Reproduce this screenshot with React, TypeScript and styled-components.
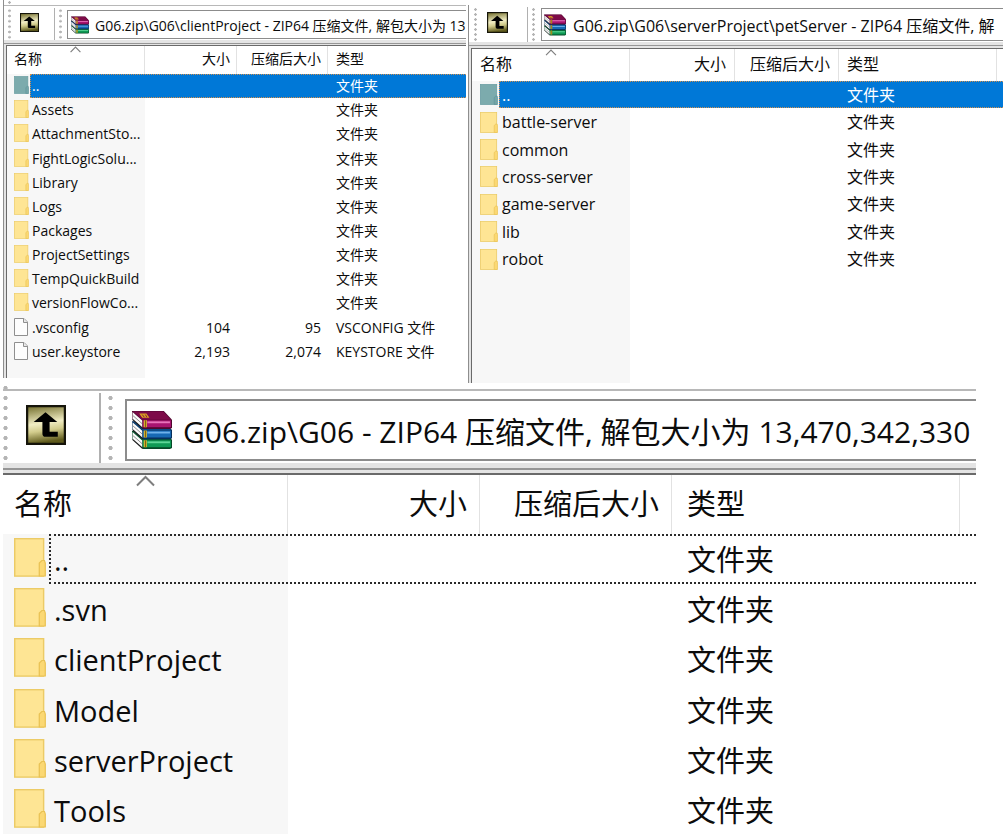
import React from 'react';
import styled, { createGlobalStyle, css, ThemeProvider } from 'styled-components';

/* ---------- metrics for the three zoom levels ---------- */

const small = {
  font: 14, pathFont: 14, line: 1, edge: 1, inset: 2, lead: 5, topLine: 1,
  bar: 34, barLift: 1, gripLead: 4, grip: 3, pitch: 5, gapA: 9, up: 19, gapB: 15, gapC: 4, gapD: 5,
  boxTop: 4, boxHeight: 29, boxPad: 3, book: 18, bookGap: 6,
  strip: 3, rule: 1, ruleGap: 1,
  head: 28, table: 318, tail: 14, padName: 7, padEnd: 7, padStart: 8,
  iconW: 15, iconH: 18, iconLift: 2, labelGap: 3, focus: 23, caretW: 11, caretH: 7,
  cols: [138, 92, 91],
};

const medium = {
  ...small,
  font: 16, pathFont: 16, inset: 2, lead: 0, topLine: 0,
  bar: 37, barLift: 3, gripLead: 5, gapA: 10, up: 21, gapB: 19, gapC: 4, gapD: 6,
  boxTop: 3, boxHeight: 33, boxPad: 2, book: 22, bookGap: 7,
  strip: 3, rule: 1, ruleGap: 2,
  head: 32, table: 224, tail: 110, padName: 8, padEnd: 9, padStart: 8,
  iconW: 18, iconH: 21, iconLift: 0, labelGap: 4, focus: 27, caretW: 12, caretH: 7,
  cols: [158, 105, 104, 158],
};

const large = {
  ...small,
  font: 29, pathFont: 30, line: 2, edge: 0, inset: 0, lead: 6, topLine: 2,
  bar: 72, barLift: 4, gripLead: 0, grip: 5, pitch: 10, gapA: 18, up: 40, gapB: 33, gapC: 7, gapD: 12,
  boxTop: 8, boxHeight: 62, boxPad: 5, book: 40, bookGap: 11,
  strip: 5, rule: 2, ruleGap: 3,
  head: 59, table: 361, tail: 0, padName: 11, padEnd: 13, padStart: 15,
  iconW: 32, iconH: 39, iconLift: 4, labelGap: 8, focus: 46, caretW: 19, caretH: 12,
  cols: [285, 192, 192, 288],
};

type Metrics = typeof small;

/* ---------- styles ---------- */

const Global = createGlobalStyle`
  *, *::before, *::after { box-sizing: border-box; }
  body {
    margin: 0;
    background: #fff;
    color: #0c0c0c;
    font-family: "Open Sans", "Noto Sans CJK SC", sans-serif;
  }
`;

const Page = styled.main`
  height: 100vh;
  padding: 0 3px;
  overflow: hidden;
`;

const TopPanes = styled.div`
  display: grid;
  grid-template-columns: 463fr 535fr;
  column-gap: 2px;
  height: 383px;
`;

const BottomPane = styled.div`
  margin-right: 27px;
`;

const Pane = styled.section<{ $drop?: number }>`
  align-self: start;
  min-width: 0;
  overflow: hidden;
  margin-top: ${(p) => p.$drop ?? 0}px;
  border-left: ${(p) => p.theme.edge}px solid #8e8e8e;
  font-size: ${(p) => p.theme.font}px;
  line-height: 1;
`;

const dots = css`
  background-image: radial-gradient(circle closest-side, #b4b4b4 70%, transparent);
  background-size: ${(p) => p.theme.grip}px ${(p) => p.theme.pitch}px;
`;

const Lead = styled.div`
  height: ${(p) => p.theme.lead}px;
  margin-left: ${(p) => p.theme.gripLead}px;
  ${dots}
  background-repeat: no-repeat;
`;

const Toolbar = styled.div`
  display: flex;
  height: ${(p) => p.theme.bar + p.theme.topLine}px;
  border-top: ${(p) => p.theme.topLine}px solid #b8b8b8;
  padding-left: ${(p) => p.theme.gripLead}px;
`;

const Grip = styled.span`
  flex: none;
  width: ${(p) => p.theme.grip}px;
  margin-top: 2px;
  ${dots}
  background-repeat: no-repeat round;
`;

const UpButton = styled.button`
  flex: none;
  display: flex;
  align-items: center;
  margin: 0 ${(p) => p.theme.gapB}px 0 ${(p) => p.theme.gapA}px;
  padding: 0 0 ${(p) => p.theme.barLift}px;
  border: 0;
  background: none;
`;

const Separator = styled.span`
  flex: none;
  width: ${(p) => p.theme.line}px;
  margin: 2px ${(p) => p.theme.gapC}px 0 0;
  background: #b0b0b0;
`;

const AddressBox = styled.div`
  flex: 1;
  min-width: 0;
  display: flex;
  align-items: center;
  gap: ${(p) => p.theme.bookGap}px;
  height: ${(p) => p.theme.boxHeight}px;
  margin: ${(p) => p.theme.boxTop}px 0 0 ${(p) => p.theme.gapD}px;
  padding-left: ${(p) => p.theme.boxPad}px;
  border: ${(p) => p.theme.line}px solid #8c8c8c;
  border-right: 0;
  font-size: ${(p) => p.theme.pathFont}px;

  svg { flex: none; }
`;

const AddressInput = styled.input`
  flex: 1;
  min-width: 0;
  height: 100%;
  padding: 0;
  border: 0;
  outline: 0;
  background: none;
  color: inherit;
  font: inherit;
`;

const Strip = styled.div`
  height: ${(p) => p.theme.strip + p.theme.rule}px;
  background: #e4e4e4;
  border-bottom: ${(p) => p.theme.rule}px solid #969696;
`;

const ListFrame = styled.div`
  padding: ${(p) => p.theme.ruleGap}px 0 0 ${(p) => p.theme.inset}px;
  background: #e4e4e4;
`;

const List = styled.div`
  border-top: ${(p) => p.theme.line}px solid #6a6a6a;
  border-left: ${(p) => p.theme.edge}px solid #6a6a6a;
  background: #fff;
`;

const Table = styled.table`
  width: 100%;
  height: ${(p) => p.theme.table}px;
  table-layout: fixed;
  border-collapse: separate;
  border-spacing: 0;
  white-space: nowrap;
`;

const HeadCell = styled.th<{ $end?: boolean; $first?: boolean; $open?: boolean }>`
  position: relative;
  height: ${(p) => p.theme.head}px;
  padding: 0 ${(p) => (p.$end ? p.theme.padEnd - 1 : 0)}px 2px
    ${(p) => (p.$first ? p.theme.padName : p.theme.padStart)}px;
  border-right: ${(p) => (p.$open ? 0 : 1)}px solid #e2e2e2;
  font-weight: 400;
  text-align: ${(p) => (p.$end ? 'right' : 'left')};
`;

const CaretBox = styled.span`
  position: absolute;
  top: 0;
  left: 0;
  right: 0;
  display: flex;
  justify-content: center;
`;

const Row = styled.tr<{ $mark?: Mark }>`
  position: relative;
  color: ${(p) => (p.$mark === 'selected' ? '#fff' : 'inherit')};
`;

const Cell = styled.td<{ $end?: boolean }>`
  padding: 0 ${(p) => (p.$end ? p.theme.padEnd : 0)}px 0 ${(p) => p.theme.padStart}px;
  text-align: ${(p) => (p.$end ? 'right' : 'left')};

  span { position: relative; }
`;

const NameCell = styled.td`
  padding: 0 0 0 ${(p) => p.theme.padName}px;
  background: #f7f7f7;
`;

/* Lies over the whole row, from the right of the icon to the pane's edge. */
const RowMark = styled.span<{ $mark: Mark }>`
  position: absolute;
  inset: 0 0 0 ${(p) => p.theme.focus}px;
  border: ${(p) => p.theme.line}px dotted ${(p) => (p.$mark === 'selected' ? '#d09050' : '#2a2a2a')};
  border-right: 0;
  background: ${(p) => (p.$mark === 'selected' ? '#0078d7' : 'none')};
`;

const Name = styled.div`
  position: relative;
  display: flex;
  align-items: center;
  gap: ${(p) => p.theme.labelGap}px;

  svg {
    flex: none;
    margin-bottom: ${(p) => p.theme.iconLift}px;
  }
`;

const Tail = styled.div`
  width: ${(p) => p.theme.cols[0]}px;
  height: ${(p) => p.theme.tail}px;
  background: #f7f7f7;
`;

/* ---------- icons ---------- */

const UpIcon = ({ size, id }: { size: number; id: string }) => (
  <svg width={size} height={size} viewBox="0 0 39 39" aria-hidden="true">
    <defs>
      <linearGradient id={id} x1="0" y1="0" x2="0.15" y2="1">
        <stop offset="0" stopColor="#6f6a28" />
        <stop offset="0.5" stopColor="#f1edc4" />
        <stop offset="0.7" stopColor="#d2cc8c" />
        <stop offset="1" stopColor="#5f5a1c" />
      </linearGradient>
    </defs>
    <rect x="1" y="1" width="37" height="37" fill={`url(#${id})`} stroke="#15140a" strokeWidth="2.4" />
    <path d="M19 7L30.5 16.5H23V26H31V31H19Q16 31 16 28V16.5H7.5Z" fill="#000" />
  </svg>
);

const BooksIcon = ({ size }: { size: number }) => (
  <svg width={size} height={size} viewBox="0 0 39 39" aria-hidden="true">
    {[
      { y: 20, cover: '#0b6b3c', spine: '#0f9a55', light: '#5fd698', dark: '#064a28' },
      { y: 10.5, cover: '#0b4a86', spine: '#1769b4', light: '#6fb2ea', dark: '#06305c' },
      { y: 0.5, cover: '#7d0b48', spine: '#a81470', light: '#e874bb', dark: '#4f062e' },
    ].map((b) => (
      <g key={b.cover} transform={`translate(0 ${b.y})`}>
        <path d="M0 0.5H31L39 9V17L37 18H11L0 8Z" fill={b.dark} />
        <path d="M1 1H30.5L38 9H10Z" fill={b.cover} />
        <path d="M0.5 1.5L10 9.8V17L0.5 8.4Z" fill="#fafafa" />
        <path d="M0.5 4.6L9.8 12.8" stroke="#8a8a8a" strokeWidth="0.9" />
        <path d="M0.5 8.6L10.5 17.6" stroke="#1c1c1c" strokeWidth="1.2" />
        <rect x="10.5" y="9.5" width="27.5" height="6.8" fill={b.spine} />
        <rect x="15" y="10.6" width="22" height="1.8" fill={b.light} />
        <rect x="11.5" y="9.5" width="3" height="6.8" fill="#d9b62c" />
        <rect x="12.6" y="9.5" width="1" height="6.8" fill="#7d5f10" />
      </g>
    ))}
    <path d="M7 3.5H14L17 7.5H10Z" fill="#dba41e" />
    <path d="M10 4.5L12 7M13 4.5L14.5 7" stroke="#7d0b48" strokeWidth="0.9" />
  </svg>
);

const FolderIcon = ({ w, h, teal }: { w: number; h: number; teal?: boolean }) => (
  <svg width={w} height={h} viewBox="0 0 31 39" preserveAspectRatio="none" aria-hidden="true">
    <rect x="0.7" y="0.7" width="28" height="37.4" fill={teal ? '#7cabad' : '#fee594'} stroke={teal ? '#6c9fa3' : '#eccb66'} strokeWidth="1.4" />
    <path d="M24.5 38V25L27 22.5H29.5L30.3 25V38Z" fill={teal ? '#74a5a8' : '#fbd873'} stroke={teal ? '#5f959a' : '#e9c254'} strokeWidth="1.2" />
  </svg>
);

const FileIcon = ({ w, h }: { w: number; h: number }) => (
  <svg width={w} height={h} viewBox="0 0 15 18" aria-hidden="true">
    <path d="M0.5 0.5H10L13.5 4V17.5H0.5Z" fill="#fdfdfd" stroke="#8f8f8f" />
    <path d="M9.5 0.5V4.5H13.5" fill="#e8e8e8" stroke="#8f8f8f" />
  </svg>
);

const Caret = ({ w, h }: { w: number; h: number }) => (
  <svg width={w} height={h} viewBox="0 0 19 12" aria-hidden="true">
    <path d="M1 10.5L9.5 2L18 10.5" fill="none" stroke="#7e7e7e" strokeWidth="2" />
  </svg>
);

/* ---------- panes ---------- */

type Mark = 'selected' | 'focused';
interface Entry {
  name: string;
  size?: string;
  packed?: string;
  type?: string;
  file?: boolean;
}

interface ArchiveProps {
  id: string;
  metrics: Metrics;
  path: string;
  mark: Mark;
  entries: Entry[];
  drop?: number;
}

const Archive = ({ id, metrics: m, path, mark, entries, drop }: ArchiveProps) => {
  const spare = m.cols.length > 3;
  return (
    <ThemeProvider theme={m}>
      <Pane $drop={drop}>
        <Lead />
        <Toolbar>
          <Grip />
          <UpButton type="button" aria-label="向上">
            <UpIcon size={m.up} id={`${id}-up`} />
          </UpButton>
          <Separator />
          <Grip />
          <AddressBox>
            <BooksIcon size={m.book} />
            <AddressInput aria-label="路径" readOnly value={path} />
          </AddressBox>
        </Toolbar>
        <Strip />
        <ListFrame>
          <List>
            <Table>
              <colgroup>
                {m.cols.map((w, i) => (
                  <col key={i} width={w} />
                ))}
                <col />
              </colgroup>
              <thead>
                <tr>
                  <HeadCell $first>
                    <CaretBox>
                      <Caret w={m.caretW} h={m.caretH} />
                    </CaretBox>
                    名称
                  </HeadCell>
                  <HeadCell $end>大小</HeadCell>
                  <HeadCell $end>压缩后大小</HeadCell>
                  <HeadCell $open={!spare}>类型</HeadCell>
                  {spare && <HeadCell $open />}
                </tr>
              </thead>
              <tbody>
                {entries.map((e, i) => (
                  <Row key={e.name} $mark={i === 0 ? mark : undefined}>
                    <NameCell>
                      {i === 0 && <RowMark $mark={mark} />}
                      <Name>
                        {e.file ? (
                          <FileIcon w={m.iconW} h={m.iconH} />
                        ) : (
                          <FolderIcon w={m.iconW} h={m.iconH} teal={i === 0 && mark === 'selected'} />
                        )}
                        {e.name}
                      </Name>
                    </NameCell>
                    <Cell $end>{e.size}</Cell>
                    <Cell $end>{e.packed}</Cell>
                    <Cell>
                      <span>{e.type ?? '文件夹'}</span>
                    </Cell>
                    {spare && <Cell as="td" />}
                  </Row>
                ))}
              </tbody>
            </Table>
            <Tail />
          </List>
        </ListFrame>
      </Pane>
    </ThemeProvider>
  );
};

const folders = (...names: string[]): Entry[] => names.map((name) => ({ name }));

const clientEntries: Entry[] = [
  ...folders(
    '..', 'Assets', 'AttachmentSto...', 'FightLogicSolu...', 'Library', 'Logs',
    'Packages', 'ProjectSettings', 'TempQuickBuild', 'versionFlowCo...',
  ),
  { name: '.vsconfig', size: '104', packed: '95', type: 'VSCONFIG 文件', file: true },
  { name: 'user.keystore', size: '2,193', packed: '2,074', type: 'KEYSTORE 文件', file: true },
];

export default function App() {
  return (
    <Page>
      <Global />
      <TopPanes>
        <Archive
          id="client"
          metrics={small}
          path="G06.zip\G06\clientProject - ZIP64 压缩文件, 解包大小为 13"
          mark="selected"
          entries={clientEntries}
        />
        <Archive
          id="server"
          metrics={medium}
          drop={5}
          path="G06.zip\G06\serverProject\petServer - ZIP64 压缩文件, 解"
          mark="selected"
          entries={folders('..', 'battle-server', 'common', 'cross-server', 'game-server', 'lib', 'robot')}
        />
      </TopPanes>
      <BottomPane>
        <Archive
          id="root"
          metrics={large}
          path="G06.zip\G06 - ZIP64 压缩文件, 解包大小为 13,470,342,330 字"
          mark="focused"
          entries={folders('..', '.svn', 'clientProject', 'Model', 'serverProject', 'Tools')}
        />
      </BottomPane>
    </Page>
  );
}
